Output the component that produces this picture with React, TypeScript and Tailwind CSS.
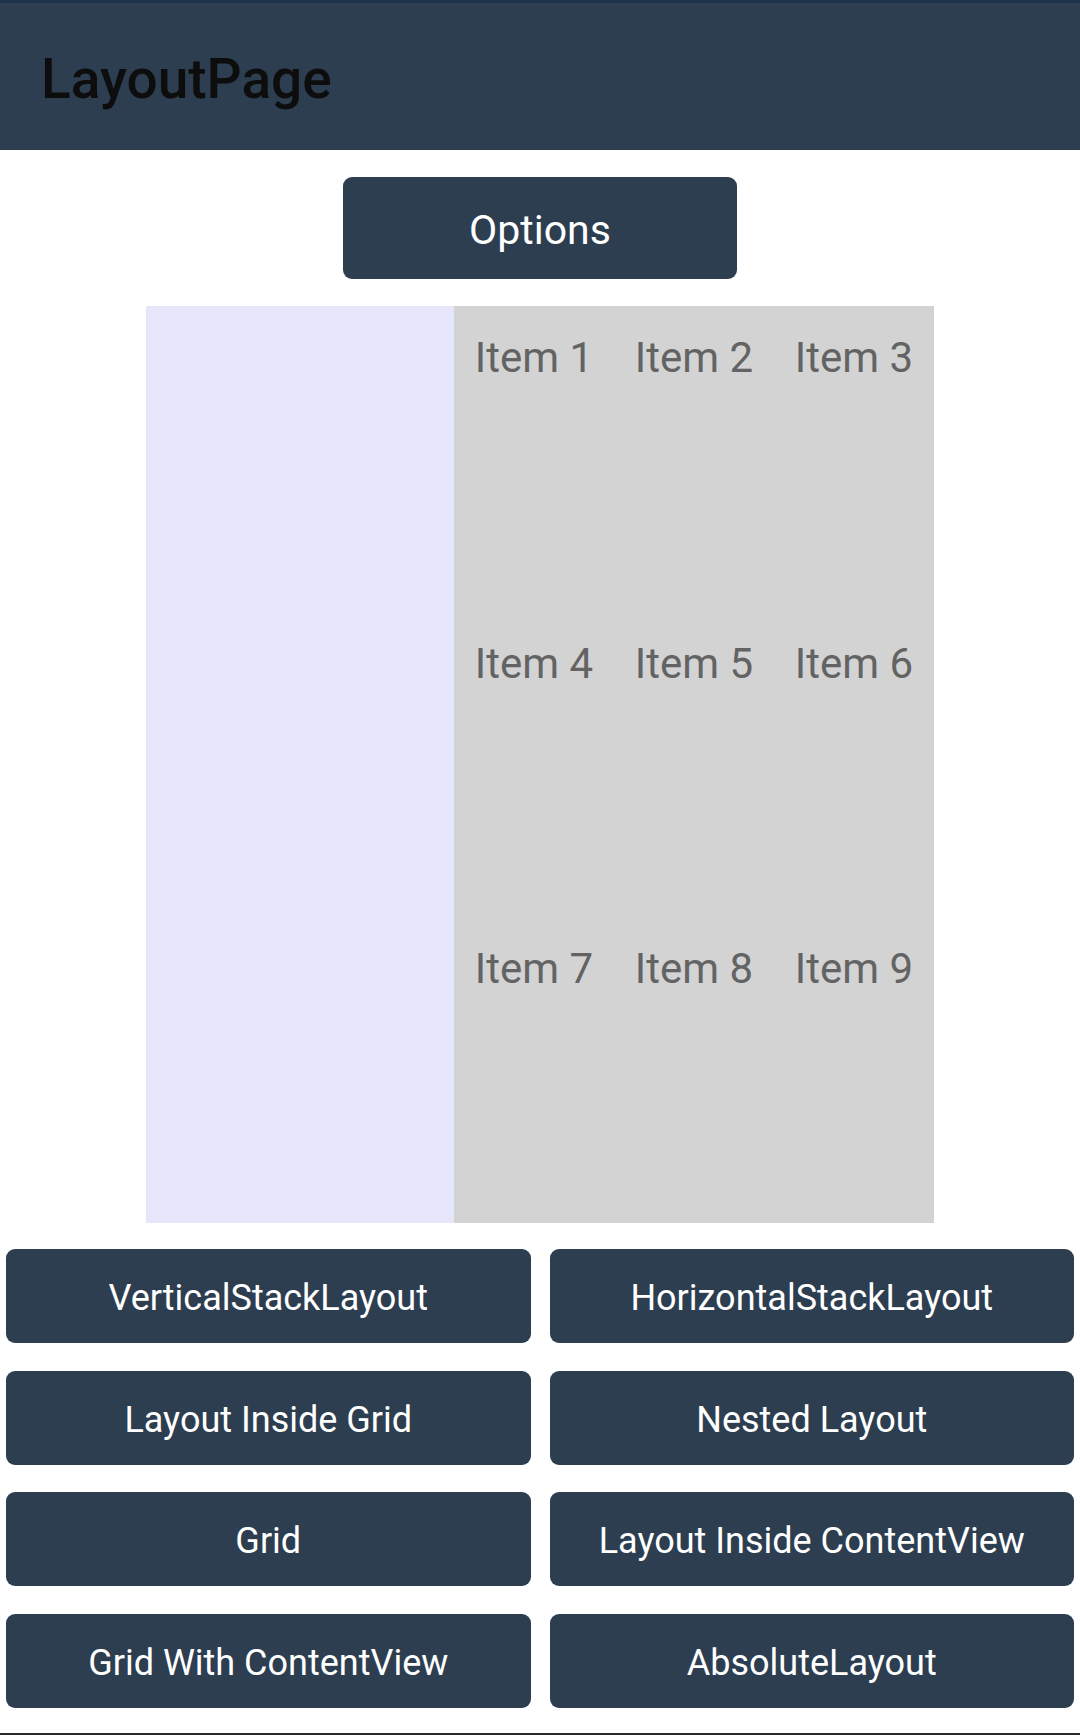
import React from 'react';

const items = ['Item 1', 'Item 2', 'Item 3', 'Item 4', 'Item 5', 'Item 6', 'Item 7', 'Item 8', 'Item 9'];

const buttons = [
  'VerticalStackLayout',
  'HorizontalStackLayout',
  'Layout Inside Grid',
  'Nested Layout',
  'Grid',
  'Layout Inside ContentView',
  'Grid With ContentView',
  'AbsoluteLayout',
];

export default function App() {
  return (
    <div className="min-h-[1735px] w-[1080px] flex flex-col bg-white font-['Roboto','Liberation_Sans',sans-serif]">
      <header className="h-[150px] shrink-0 bg-[#2c3e50] border-t-[3px] border-[#1e3248] pl-[41px] pt-[44px]">
        <h1 className="text-[55px] leading-[64px] font-medium text-[#0d0d0d]">LayoutPage</h1>
      </header>

      <div className="flex justify-center mt-[27px]">
        <button className="w-[394px] h-[102px] rounded-[9px] bg-[#2c3e50] pt-[4px] text-white text-[41px] leading-none">
          Options
        </button>
      </div>

      <div className="mx-auto mt-[27px] flex h-[917px] w-[788px]">
        <div className="w-[308px] bg-[#e6e6fa]" />
        <div className="grid flex-1 grid-cols-3 grid-rows-3 bg-[#d3d3d3]">
          {items.map((item) => (
            <div key={item} className="pt-[27px] text-center text-[42px] leading-[49px] text-[#636363]">
              {item}
            </div>
          ))}
        </div>
      </div>

      <div className="mt-[26px] grid grid-cols-2 gap-x-[19px] gap-y-[27.5px] px-[6px]">
        {buttons.map((label) => (
          <button
            key={label}
            className="h-[94px] rounded-[9px] bg-[#2c3e50] pt-[4px] text-white text-[36px] leading-none"
          >
            {label}
          </button>
        ))}
      </div>

      <div className="flex-1" />
      <div className="h-[2px] bg-[#2a2a2a]" />
    </div>
  );
}
